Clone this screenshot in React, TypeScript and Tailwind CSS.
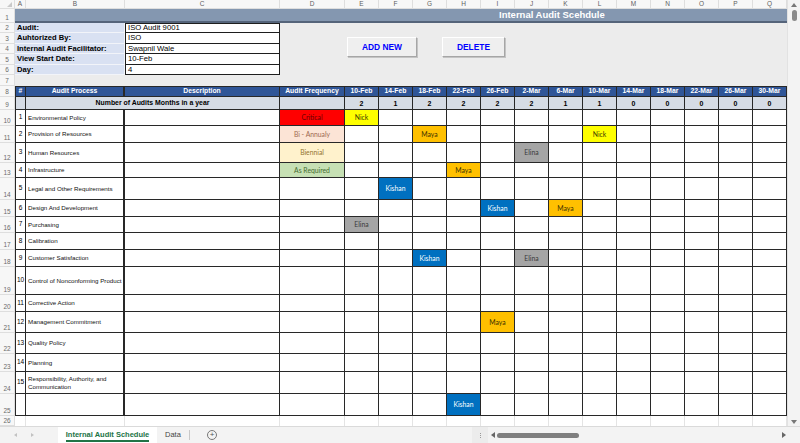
import React from "react";

const SANS = "font-['Liberation_Sans',Arial,sans-serif]";
const LATO = "font-['Lato','Liberation_Sans',sans-serif]";
const GRID = "grid grid-cols-[15px_11px_99px_155px_65px_repeat(13,34px)]";

const letters = ["A", "B", "C", "D", "E", "F", "G", "H", "I", "J", "K", "L", "M", "N", "O", "P", "Q"];
const dates = ["10-Feb", "14-Feb", "18-Feb", "22-Feb", "26-Feb", "2-Mar", "6-Mar", "10-Mar", "14-Mar", "18-Mar", "22-Mar", "26-Mar", "30-Mar"];
const counts = [2, 1, 2, 2, 2, 2, 1, 1, 0, 0, 0, 0, 0];

type Freq = "c" | "b" | "bi" | "a";
type DataRow = {
  n: number;
  idx: string;
  proc: React.ReactNode;
  h: string;
  freq?: Freq;
  names: Record<number, string>;
};

const rows: DataRow[] = [
  { n: 10, idx: "1", proc: "Environmental Policy", h: "h-[16px]", freq: "c", names: { 0: "Nick" } },
  { n: 11, idx: "2", proc: "Provision of Resources", h: "h-[17px]", freq: "b", names: { 2: "Maya", 7: "Nick" } },
  { n: 12, idx: "3", proc: "Human Resources", h: "h-[20px]", freq: "bi", names: { 5: "Elina" } },
  { n: 13, idx: "4", proc: "Infrastructure", h: "h-[15px]", freq: "a", names: { 3: "Maya" } },
  { n: 14, idx: "5", proc: "Legal and Other Requirements", h: "h-[22px]", names: { 1: "Kishan" } },
  { n: 15, idx: "6", proc: "Design And Development", h: "h-[17px]", names: { 4: "Kishan", 6: "Maya" } },
  { n: 16, idx: "7", proc: "Purchasing", h: "h-[16px]", names: { 0: "Elina" } },
  { n: 17, idx: "8", proc: "Calibration", h: "h-[17px]", names: {} },
  { n: 18, idx: "9", proc: "Customer Satisfaction", h: "h-[17px]", names: { 2: "Kishan", 5: "Elina" } },
  { n: 19, idx: "10", proc: "Control of Nonconforming Product", h: "h-[28px]", names: {} },
  { n: 20, idx: "11", proc: "Corrective Action", h: "h-[17px]", names: {} },
  { n: 21, idx: "12", proc: "Management Commitment", h: "h-[21px]", names: { 4: "Maya" } },
  { n: 22, idx: "13", proc: "Quality Policy", h: "h-[21px]", names: {} },
  { n: 23, idx: "14", proc: "Planning", h: "h-[18px]", names: {} },
  {
    n: 24,
    idx: "15",
    proc: (
      <>
        Responsibility, Authority, and
        <br />
        Communication
      </>
    ),
    h: "h-[22px]",
    names: {},
  },
  { n: 25, idx: "", proc: "", h: "h-[22px]", names: { 3: "Kishan" } },
];

const freqStyle: Record<Freq, { label: string; cls: string }> = {
  c: { label: "Critical", cls: "bg-[#ff0000] text-[#6a0000]" },
  b: { label: "Bi - Annualy", cls: "bg-[#fce4d6] text-[#a06a52]" },
  bi: { label: "Biennial", cls: "bg-[#fff2cc] text-[#92742f]" },
  a: { label: "As Required", cls: "bg-[#c6e0b4] text-[#456b2f]" },
};

const nameStyle: Record<string, string> = {
  Nick: "bg-[#ffff00] text-[#3c3c00]",
  Maya: "bg-[#ffc000] text-[#3e3000]",
  Elina: "bg-[#a5a5a5] text-[#3a3a3a]",
  Kishan: "bg-[#0070c0] text-white",
};

const cell = "border-r border-b border-[#282828]";

function RowHead({ n }: { n: number }) {
  return (
    <div className="flex items-end justify-center pb-[1px] text-[6.5px] leading-none text-[#6b6b6b] bg-[#f7f7f7] border-r border-b border-[#dedede]">
      {n}
    </div>
  );
}

function ColumnHeader() {
  return (
    <div className={`${GRID} h-[9px]`}>
      <div className="relative bg-[#f7f7f7] border-r border-b border-[#dedede]">
        <div className="absolute right-[2px] bottom-[1px] w-0 h-0 border-l-[5px] border-l-transparent border-b-[5px] border-b-[#c9c9c9]" />
      </div>
      {letters.map((l) => (
        <div
          key={l}
          className="flex items-center justify-center text-[6.5px] leading-none text-[#5e5e5e] bg-[#f7f7f7] border-r border-b border-[#dedede]"
        >
          {l}
        </div>
      ))}
    </div>
  );
}

const infoRows = [
  { n: 2, label: "Audit:", value: "ISO Audit 9001", h: "h-[10px]", top: true },
  { n: 3, label: "Auhtorized By:", value: "ISO", h: "h-[11px]", top: false },
  { n: 4, label: "Internal Audit Facilitator:", value: "Swapnil Wale", h: "h-[10px]", top: false },
  { n: 5, label: "View Start Date:", value: "10-Feb", h: "h-[11px]", top: false },
  { n: 6, label: "Day:", value: "4", h: "h-[10px]", top: false },
];

function Sheet() {
  return (
    <div className="relative w-[787px] flex flex-col">
      <ColumnHeader />
      {/* Row 1 title band */}
      <div className={`${GRID} h-[14px]`}>
        <RowHead n={1} />
        <div className="col-span-17 flex items-center pl-[484px] bg-[#8497b0] border-b-2 border-[#55647a] text-white font-bold text-[9.5px] leading-none">
          Internal Audit Scehdule
        </div>
      </div>
      {/* Rows 2-6 */}
      {infoRows.map((r) => (
        <div key={r.n} className={`${GRID} ${r.h}`}>
          <RowHead n={r.n} />
          <div className="col-span-2 flex items-center pl-[2px] bg-[#d9e1f2] border-b border-r border-[#f2f4f9] font-bold text-[7.6px] leading-none text-black whitespace-nowrap">
            {r.label}
          </div>
          <div
            className={`flex items-center pl-[2px] bg-white border-l border-r border-b border-[#1e1e1e] ${r.top ? "border-t" : ""} text-[7.7px] leading-none text-black`}
          >
            {r.value}
          </div>
          <div className="col-span-14 bg-[#ececec]" />
        </div>
      ))}
      {/* Row 7 */}
      <div className={`${GRID} h-[11px]`}>
        <RowHead n={7} />
        <div className="col-span-17 bg-[#ececec]" />
      </div>
      {/* Row 8 header */}
      <div className={`${GRID} h-[11px]`}>
        <RowHead n={8} />
        {["#", "Audit Process", "Description", "Audit Frequency", ...dates].map((t, i) => (
          <div
            key={i}
            className={`flex items-center justify-center bg-[#2f5597] text-white font-bold text-[6.8px] leading-none whitespace-nowrap border-t ${cell} ${i === 0 ? "border-l" : ""} ${i === 1 ? "border-r-2" : ""}`}
          >
            {t}
          </div>
        ))}
      </div>
      {/* Row 9 counts */}
      <div className={`${GRID} h-[13px]`}>
        <RowHead n={9} />
        <div className={`bg-[#d6dce5] border-l ${cell}`} />
        <div className={`col-span-2 flex items-center justify-center bg-[#d6dce5] font-bold text-[6.9px] leading-none text-black ${cell}`}>
          Number of Audits Months in a year
        </div>
        <div className={`bg-[#d6dce5] ${cell}`} />
        {counts.map((c, i) => (
          <div
            key={i}
            className={`flex items-center justify-center bg-[#d6dce5] font-bold text-[7px] leading-none text-black ${cell}`}
          >
            {c}
          </div>
        ))}
      </div>
      {/* Rows 10-25 */}
      {rows.map((r) => (
        <div key={r.n} className={`${GRID} ${r.h}`}>
          <RowHead n={r.n} />
          <div className={`flex items-center justify-center bg-white text-[6.5px] leading-none text-black border-l ${cell}`}>
            {r.idx}
          </div>
          <div
            className={`flex items-center pl-[2px] bg-white text-[6.2px] leading-[1.25] text-[#111] overflow-hidden whitespace-nowrap border-r-2 border-b border-[#282828]`}
          >
            <span>{r.proc}</span>
          </div>
          <div className={`bg-white ${cell}`} />
          {r.freq ? (
            <div
              className={`flex items-center justify-center ${LATO} text-[6.8px] leading-none ${freqStyle[r.freq].cls} ${cell}`}
            >
              {freqStyle[r.freq].label}
            </div>
          ) : (
            <div className={`bg-white ${cell}`} />
          )}
          {dates.map((_, i) => {
            const nm = r.names[i];
            return nm ? (
              <div
                key={i}
                className={`flex items-center justify-center ${LATO} text-[6.8px] leading-none ${nameStyle[nm]} ${cell}`}
              >
                {nm}
              </div>
            ) : (
              <div key={i} className={`bg-white ${cell}`} />
            );
          })}
        </div>
      ))}
      {/* Row 26 */}
      <div className={`${GRID} h-[10px]`}>
        <RowHead n={26} />
        {letters.map((l) => (
          <div key={l} className="bg-white border-r border-[#e4e4e4]" />
        ))}
      </div>

      {/* Buttons (shapes floating over the sheet) */}
      <div className="absolute left-[347px] top-[37px] w-[70px] h-[20px] flex items-center justify-center bg-[#efefef] border border-t-white border-l-white border-r-[#a6a6a6] border-b-[#a6a6a6] shadow-[1px_1px_0_#c4c4c4] text-[#0000ff] font-bold text-[8.4px] leading-none">
        ADD NEW
      </div>
      <div className="absolute left-[442px] top-[37px] w-[63px] h-[20px] flex items-center justify-center bg-[#efefef] border border-t-white border-l-white border-r-[#a6a6a6] border-b-[#a6a6a6] shadow-[1px_1px_0_#c4c4c4] text-[#0000ff] font-bold text-[8.4px] leading-none">
        DELETE
      </div>
    </div>
  );
}

function VScroll() {
  return (
    <div className="w-[13px] h-full flex flex-col items-center bg-[#f3f3f3] border-l border-[#e2e2e2]">
      <div className="mt-[3px] w-0 h-0 border-l-[3px] border-l-transparent border-r-[3px] border-r-transparent border-b-[4px] border-b-[#777]" />
      <div className="mt-[3px] w-[5px] h-[11px] rounded-full bg-[#8a8a8a]" />
      <div className="flex-1" />
      <div className="mb-[2px] w-0 h-0 border-l-[3px] border-l-transparent border-r-[3px] border-r-transparent border-t-[4px] border-t-[#777]" />
    </div>
  );
}

function TabBar() {
  return (
    <div className="h-[17px] flex items-stretch bg-[#f3f3f3] border-t border-[#dadada]">
      <div className="w-[58px] flex items-center">
        <span className="ml-[14px] w-0 h-0 border-t-[2.5px] border-t-transparent border-b-[2.5px] border-b-transparent border-r-[3px] border-r-[#c2c2c2]" />
        <span className="ml-[14px] w-0 h-0 border-t-[2.5px] border-t-transparent border-b-[2.5px] border-b-transparent border-l-[3px] border-l-[#c2c2c2]" />
      </div>
      <div className="w-[99px] flex items-center justify-center bg-white">
        <span className="text-[#217346] font-bold text-[7.5px] leading-none border-b-2 border-[#217346] pb-[2px] pt-[3px]">
          Internal Audit Schedule
        </span>
      </div>
      <div className="w-[32px] flex items-center">
        <span className="ml-[8px] text-[#444] text-[7.5px] leading-none">Data</span>
        <span className="ml-[8px] w-px h-[10px] bg-[#c8c8c8]" />
      </div>
      <div className="w-[30px] flex items-center">
        <span className="ml-[18px] w-[10px] h-[10px] rounded-full border border-[#777] flex items-center justify-center text-[#555] text-[8px] leading-none">
          +
        </span>
      </div>
      <div className="w-[253px]" />
      <div className="w-[16px] flex flex-col items-center justify-center gap-[1px] bg-[#ececec]">
        <span className="w-[1px] h-[1px] bg-[#999]" />
        <span className="w-[1px] h-[1px] bg-[#999]" />
        <span className="w-[1px] h-[1px] bg-[#999]" />
      </div>
      <div className="flex-1 flex items-center">
        <span className="ml-[3px] w-0 h-0 border-t-[3px] border-t-transparent border-b-[3px] border-b-transparent border-r-[4px] border-r-[#666]" />
        <span className="ml-[2px] w-[82px] h-[5px] rounded-full bg-[#7f7f7f]" />
        <span className="flex-1" />
        <span className="mr-[14px] w-0 h-0 border-t-[3px] border-t-transparent border-b-[3px] border-b-transparent border-l-[4px] border-l-[#666]" />
      </div>
    </div>
  );
}

export default function App() {
  return (
    <div className={`w-[800px] h-[443px] overflow-hidden bg-white flex flex-col ${SANS}`}>
      <div className="flex h-[426px]">
        <Sheet />
        <VScroll />
      </div>
      <TabBar />
    </div>
  );
}
